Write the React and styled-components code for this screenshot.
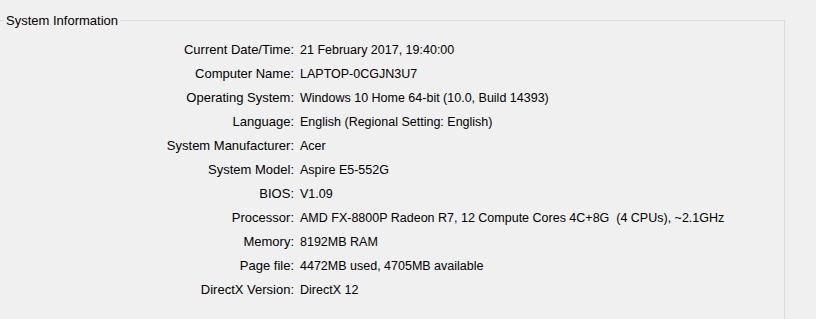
import React from 'react';
import styled, { createGlobalStyle } from 'styled-components';

const GlobalStyle = createGlobalStyle`
  html, body {
    margin: 0;
    padding: 0;
    background: #f0f0f0;
  }
  body {
    font-family: "Liberation Sans", Arial, sans-serif;
    font-size: 13px;
    color: #000;
  }
`;

// group box frame: left and bottom edges lie outside the captured area
const GroupBox = styled.fieldset`
  margin: 13px 0 0 0;
  padding: 10px 0 0 0;
  width: 785px;
  height: 306px;
  box-sizing: border-box;
  border: 1px solid #dcdcdc;
  border-left: none;
  border-bottom: none;
`;

const Title = styled.legend`
  margin-left: 4px;
  padding: 0 2px;
  line-height: 15px;
`;

const InfoGrid = styled.div`
  display: grid;
  grid-template-columns: 294px auto;
  column-gap: 6px;
  grid-auto-rows: 24px;
  line-height: 24px;
`;

const Label = styled.div`
  text-align: right;
  white-space: nowrap;
`;

const Value = styled.div`
  white-space: pre;
  font-size: 12.5px;
`;

const rows = [
  ['Current Date/Time:', '21 February 2017, 19:40:00'],
  ['Computer Name:', 'LAPTOP-0CGJN3U7'],
  ['Operating System:', 'Windows 10 Home 64-bit (10.0, Build 14393)'],
  ['Language:', 'English (Regional Setting: English)'],
  ['System Manufacturer:', 'Acer'],
  ['System Model:', 'Aspire E5-552G'],
  ['BIOS:', 'V1.09'],
  ['Processor:', 'AMD FX-8800P Radeon R7, 12 Compute Cores 4C+8G  (4 CPUs), ~2.1GHz'],
  ['Memory:', '8192MB RAM'],
  ['Page file:', '4472MB used, 4705MB available'],
  ['DirectX Version:', 'DirectX 12'],
];

const App = () => {
  return (
    <>
      <GlobalStyle />
      <GroupBox>
        <Title>System Information</Title>
        <InfoGrid>
          {rows.map(([label, value]) => (
            <React.Fragment key={label}>
              <Label>{label}</Label>
              <Value>{value}</Value>
            </React.Fragment>
          ))}
        </InfoGrid>
      </GroupBox>
    </>
  );
};

export default App;
